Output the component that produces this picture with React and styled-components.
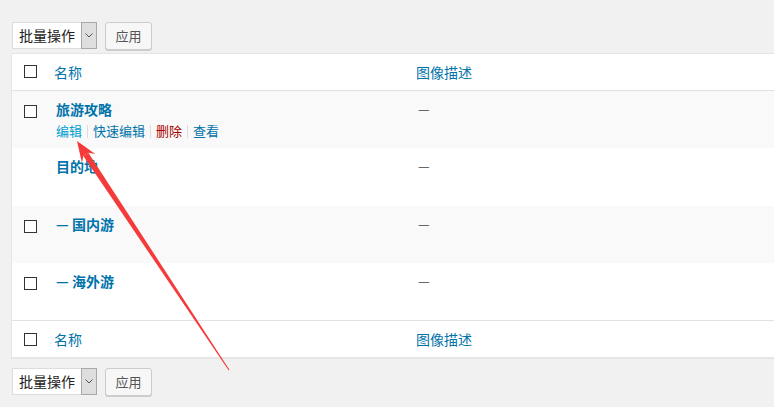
import React from "react";
import styled, { createGlobalStyle } from "styled-components";

const Global = createGlobalStyle`
  html, body { margin: 0; padding: 0; background: #f1f1f1; overflow: hidden; }
  body { font-family: "Noto Sans CJK SC", "Noto Sans", sans-serif; font-size: 13px; color: #444; }
`;

const Page = styled.div`
  position: relative;
  width: 774px;
  height: 407px;
  padding-left: 11px;
  box-sizing: border-box;
  overflow: hidden;
`;

const Toolbar = styled.div`
  display: flex;
  align-items: flex-start;
  gap: 8px;
  height: 28px;
  padding-left: 1px;
  margin-top: ${(p) => p.$top}px;
  margin-bottom: ${(p) => p.$bottom}px;
`;

const Select = styled.div`
  display: flex;
  height: 27px;
  box-sizing: border-box;
  border: 1px solid #dcdcdc;
  background: #fff;
`;

const SelectLabel = styled.div`
  width: 68px;
  padding-left: 6px;
  box-sizing: border-box;
  font-size: 14px;
  line-height: 25px;
  color: #222;
`;

const SelectArrow = styled.div`
  width: 16px;
  margin: -1px -1px -1px 0;
  box-sizing: border-box;
  border: 1px solid #a9a9a9;
  background: #dedede;
  display: flex;
  align-items: center;
  justify-content: center;
`;

const Button = styled.button`
  height: 28px;
  width: 47px;
  box-sizing: border-box;
  border: 1px solid #cccccc;
  border-radius: 3px;
  background: #f7f7f7;
  box-shadow: 0 1px 0 #cccccc;
  font-family: inherit;
  font-size: 13px;
  color: #555;
  padding: 0;
  line-height: 26px;
`;

const Table = styled.div`
  width: 800px;
  background: #fff;
  border: 1px solid #e5e5e5;
  box-shadow: 0 1px 1px rgba(0, 0, 0, 0.04);
`;

const Row = styled.div`
  display: grid;
  grid-template-columns: 32px 362px 1fr;
  background: ${(p) => (p.$alt ? "#f9f9f9" : "#fff")};
  height: ${(p) => p.$h}px;
  box-sizing: border-box;
  border-top: ${(p) => (p.$topBorder ? "1px solid #e1e1e1" : "none")};
  border-bottom: ${(p) => (p.$bottomBorder ? "1px solid #e1e1e1" : "none")};
`;

const CheckCell = styled.div`
  padding-left: 12px;
  padding-top: ${(p) => p.$pt}px;
`;

const Check = styled.span`
  display: block;
  width: 11px;
  height: 11px;
  border: 1px solid #333;
  background: #fff;
`;

const HeadCell = styled.div`
  padding-left: 10px;
  font-size: 14px;
  line-height: ${(p) => p.$lh}px;
  color: #0073aa;
`;

const Cell = styled.div`
  padding: 9px 12px 0;
`;

const Title = styled.div`
  font-size: 14px;
  line-height: 18px;
  font-weight: bold;
  color: #0073aa;
`;

const Actions = styled.div`
  margin-top: 4px;
  display: flex;
  align-items: center;
  font-size: 13px;
  line-height: 18px;
`;

const Action = styled.span`
  color: ${(p) => p.$color};
`;

const Sep = styled.span`
  width: 1px;
  height: 13px;
  background: #dddddd;
  margin: 0 5px;
`;

const Dash = styled.div`
  font-size: 13px;
  line-height: 18px;
  color: #444;
`;

const Overlay = styled.svg`
  position: absolute;
  left: 0;
  top: 0;
  pointer-events: none;
`;

function Chevron() {
  return (
    <svg width="8" height="5" viewBox="0 0 8 5">
      <path d="M0.5 0.5 L4 4 L7.5 0.5" fill="none" stroke="#555" strokeWidth="1" />
    </svg>
  );
}

function Bulk({ top, bottom }) {
  return (
    <Toolbar $top={top} $bottom={bottom}>
      <Select>
        <SelectLabel>批量操作</SelectLabel>
        <SelectArrow>
          <Chevron />
        </SelectArrow>
      </Select>
      <Button>应用</Button>
    </Toolbar>
  );
}

const rows = [
  { title: "旅游攻略", check: true, alt: true, h: 57, actions: true },
  { title: "目的地", check: false, alt: false, h: 58 },
  { title: "— 国内游", check: true, alt: true, h: 57 },
  { title: "— 海外游", check: true, alt: false, h: 57 },
];

function Arrow() {
  const tip = [77, 141];
  const tail = [229, 370];
  const dx = tail[0] - tip[0];
  const dy = tail[1] - tip[1];
  const len = Math.hypot(dx, dy);
  const u = [dx / len, dy / len];
  const p = [-u[1], u[0]];
  const headLen = 21;
  const base = [tip[0] + u[0] * headLen, tip[1] + u[1] * headLen];
  const neck = [tip[0] + u[0] * (headLen - 5), tip[1] + u[1] * (headLen - 5)];
  const pt = (c, k) => `${c[0] + p[0] * k},${c[1] + p[1] * k}`;
  const shaft = [pt(neck, 3), pt(tail, 0.5), pt(tail, -0.5), pt(neck, -3)].join(" ");
  const head = [`${tip[0]},${tip[1]}`, pt(base, 8), pt(neck, 3), pt(neck, -3), pt(base, -8)].join(" ");
  return (
    <Overlay width="774" height="407" viewBox="0 0 774 407">
      <polygon points={shaft} fill="#f53a3a" />
      <polygon points={head} fill="#f53a3a" />
    </Overlay>
  );
}

export default function App() {
  return (
    <>
      <Global />
      <Page>
        <Bulk top={22} bottom={3} />
        <Table>
          <Row $h={37} $bottomBorder>
            <CheckCell $pt={11}>
              <Check />
            </CheckCell>
            <HeadCell $lh={36}>名称</HeadCell>
            <HeadCell $lh={36}>图像描述</HeadCell>
          </Row>
          {rows.map((r, i) => (
            <Row key={i} $alt={r.alt} $h={r.h}>
              <CheckCell $pt={14}>{r.check && <Check />}</CheckCell>
              <Cell>
                <Title>{r.title}</Title>
                {r.actions && (
                  <Actions>
                    <Action $color="#00a0d2">编辑</Action>
                    <Sep />
                    <Action $color="#0073aa">快速编辑</Action>
                    <Sep />
                    <Action $color="#a00">删除</Action>
                    <Sep />
                    <Action $color="#0073aa">查看</Action>
                  </Actions>
                )}
              </Cell>
              <Cell>
                <Dash>—</Dash>
              </Cell>
            </Row>
          ))}
          <Row $h={37} $topBorder>
            <CheckCell $pt={12}>
              <Check />
            </CheckCell>
            <HeadCell $lh={36}>名称</HeadCell>
            <HeadCell $lh={36}>图像描述</HeadCell>
          </Row>
        </Table>
        <Bulk top={10} bottom={0} />
        <Arrow />
      </Page>
    </>
  );
}
